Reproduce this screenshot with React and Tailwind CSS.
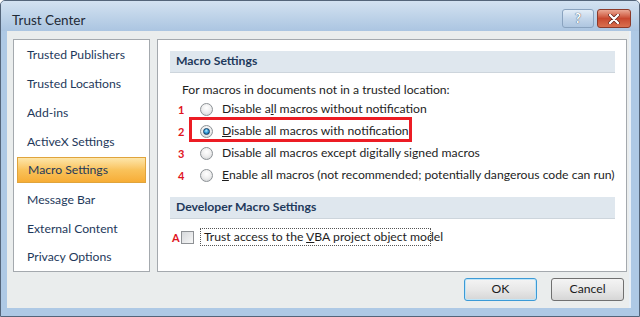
export default function App() {
  const nav = [
    "Trusted Publishers",
    "Trusted Locations",
    "Add-ins",
    "ActiveX Settings",
    "Macro Settings",
    "Message Bar",
    "External Content",
    "Privacy Options",
  ];
  const Radio = ({ on }) => (
    <div className="w-[13px] h-[13px] rounded-full border border-[#8d9296] bg-[radial-gradient(circle_at_50%_35%,#ffffff_0%,#eeeeee_50%,#c9cccf_100%)] flex items-center justify-center shrink-0">
      {on && (
        <div className="w-[7px] h-[7px] rounded-full bg-[radial-gradient(circle_at_45%_35%,#b8ecff_0%,#3aa0dc_45%,#0d4f86_100%)] border border-[#123d63]" />
      )}
    </div>
  );
  const Num = ({ n }) => (
    <div className="w-[22px] shrink-0 text-[11px] font-bold text-[#e0141c] leading-none">{n}</div>
  );
  return (
    <div className="w-[640px] h-[317px] flex flex-col bg-[#aec9e5] border border-[#54657a] rounded-t-[5px] overflow-hidden font-['Lato',sans-serif] text-[12.2px] whitespace-nowrap">
      <div className="h-[30px] shrink-0 flex items-start justify-between pl-[11px] pr-[8px] bg-gradient-to-b from-[#d3e2f1] to-[#abc5e1]">
        <div className="pt-[10px] text-[13.5px] leading-[18px] text-[#1f2a36]">Trust Center</div>
        <div className="flex gap-[3px] pt-[8px]">
          <div className="w-[32px] h-[19px] rounded-[3px] border border-[#8aa3bf] bg-gradient-to-b from-[#e3edf7] via-[#c4d6ea] to-[#aec6e0] flex items-center justify-center text-[13px] font-bold text-white leading-none [text-shadow:0_0_1px_#4a5d74,0_0_1px_#4a5d74]">
            ?
          </div>
          <div className="w-[34px] h-[19px] rounded-[3px] border border-[#8c3a2a] bg-gradient-to-b from-[#eaa793] via-[#c8482f] to-[#d9704f] flex items-center justify-center">
            <svg width="12" height="10" viewBox="0 0 12 10">
              <path d="M2 1 L10 9 M10 1 L2 9" stroke="#5a1a10" strokeWidth="3.6" strokeLinecap="round" />
              <path d="M2 1 L10 9 M10 1 L2 9" stroke="#ffffff" strokeWidth="2.4" strokeLinecap="round" />
            </svg>
          </div>
        </div>
      </div>
      <div className="ml-[6px] mr-[8px] mb-[8px] flex-1 flex flex-col bg-[#eaeded] border-r-2 border-[#e8f0f8] pt-[8px] pl-[6px] pr-[4px] pb-[7px]">
        <div className="flex gap-[7px] h-[233px]">
          <div className="w-[137px] shrink-0 bg-white border border-[#a4a9ae] flex flex-col">
            {nav.map((t, i) =>
              i === 4 ? (
                <div key={t} className="h-[29px] flex items-center px-[3px]">
                  <div className="w-full h-[26px] flex items-center pl-[10px] pt-[1px] border border-[#e0a43c] bg-gradient-to-b from-[#fde6a9] via-[#f9c25a] to-[#f7ad35] text-[#1e395b]">
                    {t}
                  </div>
                </div>
              ) : (
                <div key={t} className="h-[29px] flex items-center pl-[13px] pt-[2px] text-[#1e395b]">
                  {t}
                </div>
              )
            )}
          </div>
          <div className="flex-1 bg-white border border-[#a4a9ae] pt-[11px] pl-[12px] pr-[11px] flex flex-col text-[#1e1e1e]">
            <div className="h-[22px] flex items-center pl-[6px] bg-[#dfe7ee] border-b border-[#cdd5dc] font-bold text-[#1e395b]">
              Macro Settings
            </div>
            <div className="h-[16px] mt-[9px] pl-[12px] flex items-center">
              For macros in documents not in a trusted location:
            </div>
            <div className="h-[22px] flex items-center pl-[8px]">
              <Num n="1" />
              <Radio />
              <div className="ml-[9px]">Disable a<u>l</u>l macros without notification</div>
            </div>
            <div className="h-[22px] flex items-center pl-[8px] relative">
              <Num n="2" />
              <Radio on />
              <div className="ml-[9px]"><u>D</u>isable all macros with notification</div>
              <div className="absolute left-[19px] top-[-3px] w-[223px] h-[25px] border-[3px] border-[#ec1c24]" />
            </div>
            <div className="h-[22px] flex items-center pl-[8px]">
              <Num n="3" />
              <Radio />
              <div className="ml-[9px]">Disable all macros except di<u>g</u>itally signed macros</div>
            </div>
            <div className="h-[22px] flex items-center pl-[8px]">
              <Num n="4" />
              <Radio />
              <div className="ml-[9px]"><u>E</u>nable all macros (not recommended; potentially dangerous code can run)</div>
            </div>
            <div className="h-[22px] mt-[11px] flex items-center pl-[6px] bg-[#dfe7ee] border-b border-[#cdd5dc] font-bold text-[#1e395b]">
              Developer Macro Settings
            </div>
            <div className="h-[18px] mt-[9px] flex items-center pl-[2px]">
              <div className="w-[9px] shrink-0 text-[11px] font-bold text-[#e0141c] leading-none">A</div>
              <div className="w-[13px] h-[13px] shrink-0 border border-[#8e9195] bg-gradient-to-br from-[#d6d8db] to-[#f7f7f7]" />
              <div className="ml-[6px] w-[231px] h-[18px] border border-dotted border-[#555] flex items-center pl-[3px]">
                <span>Trust access to the <u>V</u>BA project object model</span>
              </div>
            </div>
          </div>
        </div>
        <div className="mt-[6px] h-[23px] flex justify-end gap-[14px] pr-[1px]">
          <div className="w-[73px] h-[23px] rounded-[3px] border border-[#3c9ad6] bg-gradient-to-b from-[#f4f4f4] via-[#e8e8e8] to-[#d6d6d6] flex items-center justify-center text-[#1b1b1b] shadow-[inset_0_0_0_1px_#bfe5f8]">
            OK
          </div>
          <div className="w-[73px] h-[23px] rounded-[3px] border border-[#707070] bg-gradient-to-b from-[#f4f4f4] via-[#e8e8e8] to-[#d6d6d6] flex items-center justify-center text-[#1b1b1b]">
            Cancel
          </div>
        </div>
      </div>
    </div>
  );
}
